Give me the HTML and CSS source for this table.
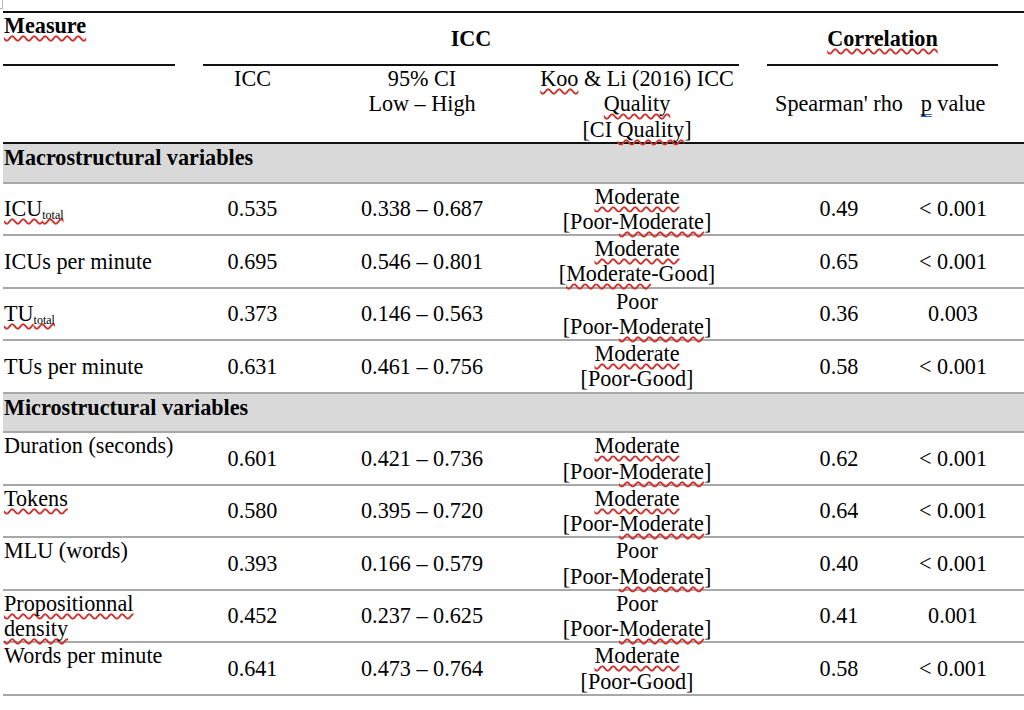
FILE: index.html
```html
<!DOCTYPE html>
<html lang="en">
<head>
<meta charset="utf-8">
<title>ICC and correlation table</title>
<link rel="stylesheet" href="styles.css">
</head>
<body>
<div class="handle"></div>
<div class="tbl">
  <div class="row hdr1">
    <div class="h1cell h-measure"><span class="sq">Measure</span></div>
    <div class="h1cell h-icc">ICC</div>
    <div class="h1cell h-corr"><span class="sq">Correlation</span></div>
  </div>
  <div class="row hdr2">
    <div class="cell c1"></div>
    <div class="cell c2 top">ICC</div>
    <div class="cell c3 top">95% CI<br>Low – High</div>
    <div class="cell c4 top"><span class="sq">Koo</span> &amp; Li (2016) ICC<br><span class="sq">Quality</span><br>[CI <span class="sq">Quality</span>]</div>
    <div class="cell c5">Spearman' rho</div>
    <div class="cell c6"><span class="dbl">p</span> value</div>
  </div>

  <div class="band">Macrostructural variables</div>

  <div class="row data">
    <div class="cell c1"><span class="sq">ICU<sub>total</sub></span></div>
    <div class="cell c2">0.535</div>
    <div class="cell c3">0.338 – 0.687</div>
    <div class="cell c4"><span class="sq">Moderate</span><br>[Poor-<span class="sq">Moderate</span>]</div>
    <div class="cell c5">0.49</div>
    <div class="cell c6">&lt; 0.001</div>
  </div>
  <div class="row data">
    <div class="cell c1">ICUs per minute</div>
    <div class="cell c2">0.695</div>
    <div class="cell c3">0.546 – 0.801</div>
    <div class="cell c4"><span class="sq">Moderate</span><br>[<span class="sq">Moderate</span>-Good]</div>
    <div class="cell c5">0.65</div>
    <div class="cell c6">&lt; 0.001</div>
  </div>
  <div class="row data">
    <div class="cell c1"><span class="sq">TU<sub>total</sub></span></div>
    <div class="cell c2">0.373</div>
    <div class="cell c3">0.146 – 0.563</div>
    <div class="cell c4">Poor<br>[Poor-<span class="sq">Moderate</span>]</div>
    <div class="cell c5">0.36</div>
    <div class="cell c6">0.003</div>
  </div>
  <div class="row data">
    <div class="cell c1">TUs per minute</div>
    <div class="cell c2">0.631</div>
    <div class="cell c3">0.461 – 0.756</div>
    <div class="cell c4"><span class="sq">Moderate</span><br>[Poor-Good]</div>
    <div class="cell c5">0.58</div>
    <div class="cell c6">&lt; 0.001</div>
  </div>

  <div class="band">Microstructural variables</div>

  <div class="row data">
    <div class="cell c1 top">Duration (seconds)</div>
    <div class="cell c2">0.601</div>
    <div class="cell c3">0.421 – 0.736</div>
    <div class="cell c4"><span class="sq">Moderate</span><br>[Poor-<span class="sq">Moderate</span>]</div>
    <div class="cell c5">0.62</div>
    <div class="cell c6">&lt; 0.001</div>
  </div>
  <div class="row data">
    <div class="cell c1 top"><span class="sq">Tokens</span></div>
    <div class="cell c2">0.580</div>
    <div class="cell c3">0.395 – 0.720</div>
    <div class="cell c4"><span class="sq">Moderate</span><br>[Poor-<span class="sq">Moderate</span>]</div>
    <div class="cell c5">0.64</div>
    <div class="cell c6">&lt; 0.001</div>
  </div>
  <div class="row data">
    <div class="cell c1 top">MLU (words)</div>
    <div class="cell c2">0.393</div>
    <div class="cell c3">0.166 – 0.579</div>
    <div class="cell c4">Poor<br>[Poor-<span class="sq">Moderate</span>]</div>
    <div class="cell c5">0.40</div>
    <div class="cell c6">&lt; 0.001</div>
  </div>
  <div class="row data">
    <div class="cell c1 top"><span class="sq">Propositionnal</span><br><span class="sq">density</span></div>
    <div class="cell c2">0.452</div>
    <div class="cell c3">0.237 – 0.625</div>
    <div class="cell c4">Poor<br>[Poor-<span class="sq">Moderate</span>]</div>
    <div class="cell c5">0.41</div>
    <div class="cell c6">0.001</div>
  </div>
  <div class="row data">
    <div class="cell c1 top">Words per minute</div>
    <div class="cell c2">0.641</div>
    <div class="cell c3">0.473 – 0.764</div>
    <div class="cell c4"><span class="sq">Moderate</span><br>[Poor-Good]</div>
    <div class="cell c5">0.58</div>
    <div class="cell c6">&lt; 0.001</div>
  </div>
</div>
</body>
</html>
```
FILE: styles.css
```css
html, body {
  margin: 0;
  padding: 0;
  background: #ffffff;
}
body {
  font-family: "Liberation Serif", "Times New Roman", serif;
  font-size: 22.2px;
  line-height: 25.25px;
  color: #000000;
  overflow: hidden;
}
.handle {
  width: 2px;
  height: 8px;
  border-right: 1px solid #b8b8b8;
  border-bottom: 1px solid #b8b8b8;
  margin-bottom: 2px;
}
.tbl {
  margin-left: 3px;
  width: 1030px;
  border-top: 2px solid #111111;
}
.row {
  display: grid;
  grid-template-columns: 186px 127px 212px 218px 172px 115px;
}
.hdr1 .h-measure { grid-column: 1; }
.hdr1 .h-icc { grid-column: 2 / span 3; }
.hdr1 .h-corr { grid-column: 5 / span 2; }
.h1cell {
  height: 51px;
  border-bottom: 2px solid #111111;
  font-weight: bold;
  display: flex;
  align-items: center;
  justify-content: center;
}
.h-measure {
  align-items: flex-start;
  justify-content: flex-start;
  margin-right: 14px;
  padding-left: 1px;
}
.h-icc {
  margin-left: 14px;
  margin-right: 7px;
}
.h-corr {
  margin-left: 21px;
  margin-right: 35px;
}
.hdr2 {
  height: 75.75px;
  border-bottom: 2px solid #111111;
}
.cell {
  align-self: center;
  text-align: center;
  white-space: nowrap;
}
.cell.top {
  align-self: start;
}
.c1 {
  text-align: left;
  padding-left: 1px;
}
.c5 {
  padding-left: 14px;
}
.c6 {
  padding-right: 45px;
}
.data {
  height: 50.5px;
  border-bottom: 2px solid #a8a8a8;
}
.band {
  background: #d9d9d9;
  font-weight: bold;
  padding-left: 1px;
  padding-top: 1px;
  padding-bottom: 11.5px;
  border-bottom: 2px solid #a8a8a8;
}
.sq {
  text-decoration: underline wavy #d0312d;
  text-decoration-thickness: 1.5px;
  text-underline-offset: 2px;
  text-decoration-skip-ink: none;
}
.dbl {
  text-decoration: underline double #2f5fb3;
  text-decoration-thickness: 1px;
  text-underline-offset: 3px;
  text-decoration-skip-ink: none;
}
sub {
  font-size: 12px;
  line-height: 0;
  vertical-align: -3px;
}
```
